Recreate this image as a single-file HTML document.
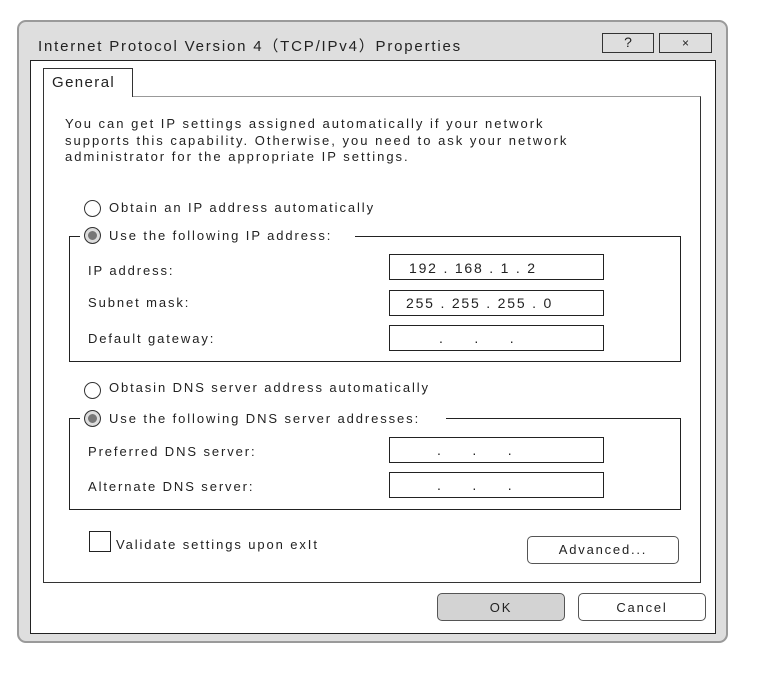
<!DOCTYPE html><html><head><style>
body{margin:0;width:775px;height:691px;background:#fff;font-family:"Liberation Sans",sans-serif;color:#222;position:relative;overflow:hidden}
div,span{position:absolute;box-sizing:border-box}
.t{font-size:13px;letter-spacing:1.9px;white-space:nowrap}
.inp{border:1px solid #222;background:#fff;left:389px;width:215px;height:26px;font-size:14px;letter-spacing:1.8px}
.rad{width:17px;height:17px;border:1px solid #333;border-radius:50%;background:#fff}
.btn{border:1px solid #555;border-radius:5px;font-size:13px;letter-spacing:1.8px;text-align:center}
</style></head><body>
<div style="left:17px;top:20px;width:711px;height:623px;background:#dedede;border:2px solid #9a9a9a;border-radius:9px"></div>
<div class="t" style="left:38px;top:35px;font-size:15px;letter-spacing:1.8px">Internet Protocol Version 4（TCP/IPv4）Properties</div>
<div style="left:602px;top:33px;width:52px;height:20px;border:1px solid #333;text-align:center;font-size:14px">?</div>
<div style="left:659px;top:33px;width:53px;height:20px;border:1px solid #333;text-align:center;font-size:12px;line-height:18px">×</div>
<div style="left:30px;top:60px;width:686px;height:574px;background:#fff;border:1px solid #222"></div>
<div style="left:43px;top:96px;width:658px;height:487px;border:1px solid #333;border-top-color:#999"></div>
<div style="left:43px;top:68px;width:90px;height:29px;border:1px solid #333;border-bottom:none;background:#fff"></div>
<div class="t" style="left:52px;top:74px;font-size:15px;letter-spacing:1.4px">General</div>
<div class="t" style="left:65px;top:116px;line-height:16.5px;letter-spacing:2px">You can get IP settings assigned automatically if your network<br>supports this capability. Otherwise, you need to ask your network<br>administrator for the appropriate IP settings.</div>
<div class="rad" style="left:84px;top:200px"></div>
<div class="t" style="left:109px;top:200px">Obtain an IP address automatically</div>
<div style="left:69px;top:236px;width:612px;height:126px;border:1px solid #222"></div>
<div style="left:80px;top:228px;width:275px;height:16px;background:#fff"></div>
<div class="rad" style="left:84px;top:227px;background:#777;box-shadow:inset 0 0 0 3px #ddd"></div>
<div class="t" style="left:109px;top:228px">Use the following IP address:</div>
<div class="t" style="left:88px;top:263px">IP address:</div>
<div class="t" style="left:88px;top:295px">Subnet mask:</div>
<div class="t" style="left:88px;top:331px">Default gateway:</div>
<div class="inp" style="top:254px;padding:5px 0 0 19px">192 . 168 . 1 . 2</div>
<div class="inp" style="top:290px;padding:4px 0 0 16px">255 . 255 . 255 . 0</div>
<div class="inp" style="top:325px;padding:4px 0 0 49px;word-spacing:24px">. . .</div>
<div class="rad" style="left:84px;top:382px"></div>
<div class="t" style="left:109px;top:380px">Obtasin DNS server address automatically</div>
<div style="left:69px;top:418px;width:612px;height:92px;border:1px solid #222"></div>
<div style="left:80px;top:410px;width:366px;height:16px;background:#fff"></div>
<div class="rad" style="left:84px;top:410px;background:#777;box-shadow:inset 0 0 0 3px #ddd"></div>
<div class="t" style="left:109px;top:411px">Use the following DNS server addresses:</div>
<div class="t" style="left:88px;top:444px">Preferred DNS server:</div>
<div class="t" style="left:88px;top:479px">Alternate DNS server:</div>
<div class="inp" style="top:437px;padding:4px 0 0 47px;word-spacing:24px">. . .</div>
<div class="inp" style="top:472px;padding:4px 0 0 47px;word-spacing:24px">. . .</div>
<div style="left:89px;top:531px;width:22px;height:21px;border:1px solid #222"></div>
<div class="t" style="left:116px;top:537px">Validate settings upon exIt</div>
<div class="btn" style="left:527px;top:536px;width:152px;height:28px;line-height:26px">Advanced...</div>
<div class="btn" style="left:437px;top:593px;width:128px;height:28px;line-height:27px;background:#d3d3d3">OK</div>
<div class="btn" style="left:578px;top:593px;width:128px;height:28px;line-height:27px;background:#fff">Cancel</div>
</body></html>
